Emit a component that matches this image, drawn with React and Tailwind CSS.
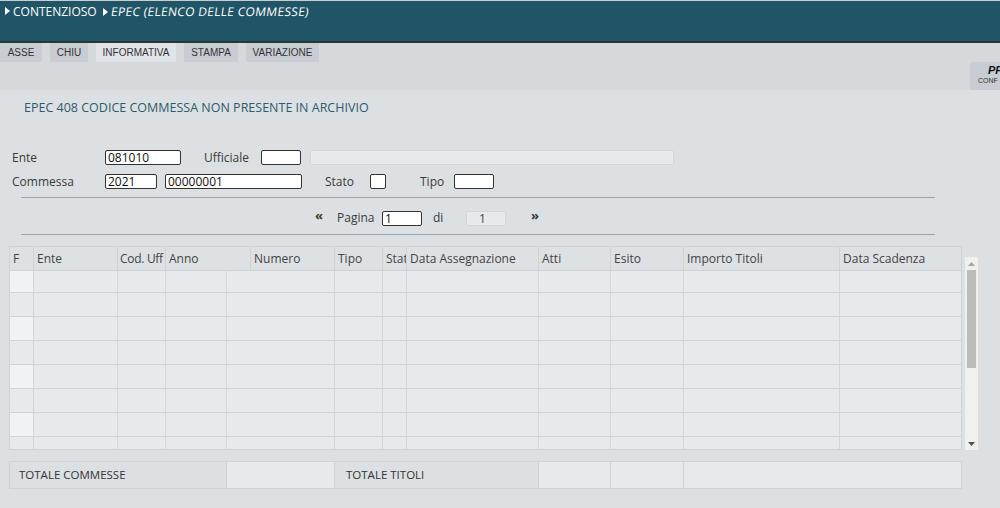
import React from 'react'

const headCols = [
  { label: 'F', w: 24 },
  { label: 'Ente', w: 84 },
  { label: 'Cod. Uff', w: 48 },
  { label: 'Anno', w: 85 },
  { label: 'Numero', w: 84 },
  { label: 'Tipo', w: 48 },
  { label: 'Stato', w: 24 },
  { label: 'Data Assegnazione', w: 132 },
  { label: 'Atti', w: 72 },
  { label: 'Esito', w: 73 },
  { label: 'Importo Titoli', w: 156 },
  { label: 'Data Scadenza', w: 123 },
]

const bodyCols = [24, 84, 48, 61, 108, 48, 24, 132, 72, 73, 156, 123]

const tabs = [
  { label: 'ASSE', w: 42 },
  { label: 'CHIU', w: 38 },
  { label: 'INFORMATIVA', w: 80 },
  { label: 'STAMPA', w: 54 },
  { label: 'VARIAZIONE', w: 73 },
]

const Arrow = () => (
  <svg width="5" height="8" viewBox="0 0 5 8" className="inline-block mr-[3px] mb-[2px]">
    <path d="M0 0 L5 4 L0 8 Z" fill="#ffffff" />
  </svg>
)

const Input = ({ value, w, disabled }) => (
  <div
    className={
      disabled
        ? 'h-[15px] border border-[#d3d7da] bg-[#e7eaed] rounded-[2px] text-[12px] leading-[13px] pl-[12px] text-[#444]'
        : 'h-[15px] border border-[#333] bg-white rounded-[2px] text-[12px] leading-[13px] pl-[2px] text-[#111]'
    }
    style={{ width: w }}
  >
    {value}
  </div>
)

const App = () => {
  const rows = Array.from({ length: 8 })

  return (
    <div className="w-[1000px] h-[508px] overflow-hidden bg-[#dce0e3] text-[#333] font-['Open_Sans',sans-serif]">
      {/* header */}
      <div className="h-[43px] bg-[#1f5567] border-t border-[#c9cdd0] border-b-2 border-b-[#28373c] pl-[5px] pt-[2px]">
        <div className="text-white text-[12px] leading-[18px] flex items-center">
          <Arrow />
          <span>CONTENZIOSO</span>
          <span className="ml-[6px]"><Arrow /></span>
          <span className="inline-block -skew-x-[8deg] tracking-[0.3px]">EPEC (ELENCO DELLE COMMESSE)</span>
        </div>
      </div>

      {/* tabs */}
      <div className="h-[47px] bg-[#d5d9dc] flex flex-col">
        <div className="flex gap-[8px] h-[19px]">
          {tabs.map((t) => (
            <div
              key={t.label}
              className={
                (t.label === 'INFORMATIVA' ? 'bg-[#e1e4e7]' : 'bg-[#c7cdd2]') +
                " text-center text-[10px] leading-[19px] text-[#333] font-['Liberation_Sans',sans-serif]"
              }
              style={{ width: t.w }}
            >
              {t.label}
            </div>
          ))}
        </div>
        <div className="flex justify-end flex-1">
          <div className="w-[30px] h-[28px] bg-[#c7cdd2] rounded-tl-[3px] pl-[8px] pt-[2px] overflow-hidden font-['Liberation_Sans',sans-serif]">
            <div className="text-[11px] leading-[13px] font-bold italic text-[#111] pl-[10px]">PF</div>
            <div className="text-[7px] leading-[8px] text-[#333]">CONF</div>
          </div>
        </div>
      </div>

      {/* message */}
      <div className="pl-[24px] pt-[11px] text-[12.5px] leading-[14px] text-[#2e5a6d]">
        EPEC 408 CODICE COMMESSA NON PRESENTE IN ARCHIVIO
      </div>

      {/* form */}
      <div className="pt-[35px] pl-[12px] text-[12px] text-[#3a3a3a]">
        <div className="flex items-center h-[15px]">
          <span className="w-[93px]">Ente</span>
          <Input value="081010" w={76} />
          <span className="ml-[23px] w-[57px]">Ufficiale</span>
          <Input value="" w={40} />
          <span className="ml-[9px]"><Input value="" w={364} disabled /></span>
        </div>
        <div className="flex items-center h-[15px] mt-[9px]">
          <span className="w-[93px]">Commessa</span>
          <Input value="2021" w={52} />
          <span className="ml-[8px]"><Input value="00000001" w={137} /></span>
          <span className="ml-[23px] w-[45px]">Stato</span>
          <Input value="" w={16} />
          <span className="ml-[34px] w-[34px]">Tipo</span>
          <Input value="" w={40} />
        </div>
      </div>

      <div className="ml-[21px] w-[914px] h-[1px] bg-[#8ca7af] mt-[8px]" />

      {/* pagination */}
      <div className="flex items-center h-[16px] mt-[12px] text-[12px] text-[#3a3a3a]">
        <span className="ml-[315px] w-[22px] font-bold text-[13px] leading-[12px] -mt-[6px]">«</span>
        <span className="w-[45px]">Pagina</span>
        <Input value="1" w={40} />
        <span className="ml-[11px] w-[33px]">di</span>
        <Input value="1" w={40} disabled />
        <span className="ml-[25px] font-bold text-[13px] leading-[12px] -mt-[6px]">»</span>
      </div>

      <div className="ml-[21px] w-[914px] h-[1px] bg-[#8ca7af] mt-[8px]" />

      {/* table */}
      <div className="flex mt-[11px] ml-[9px]">
        <div className="w-[953px] border border-[#cfd3d6]">
          <div className="flex h-[24px] bg-[#dde1e4] border-b border-[#cfd3d6]">
            {headCols.map((c, i) => (
              <div
                key={i}
                className={
                  (i > 0 ? 'border-l border-[#cfd3d6] ' : '') +
                  (i === 2 ? 'pl-[2px] tracking-[-0.3px] ' : 'pl-[3px] ') +
                  'shrink-0 overflow-hidden whitespace-nowrap text-[12px] leading-[23px] text-[#444]'
                }
                style={{ width: c.w - (i === 0 ? 1 : 0) }}
              >
                {c.label}
              </div>
            ))}
          </div>
          <div className="h-[178px] overflow-hidden bg-[#e6eaed]">
            {rows.map((_, r) => (
              <div key={r} className={(r === 0 ? 'h-[22px] ' : 'h-[24px] ') + 'flex border-b border-[#cfd3d6]'}>
                {bodyCols.map((w, i) => (
                  <div
                    key={i}
                    className={
                      (i > 0 ? 'border-l border-[#d2d6d9] ' : '') +
                      (i === 0 && r % 2 === 0 ? 'bg-[#f1f2f3] ' : '') +
                      'shrink-0'
                    }
                    style={{ width: w - (i === 0 ? 1 : 0) }}
                  />
                ))}
              </div>
            ))}
          </div>
        </div>

        {/* scrollbar */}
        <div className="ml-[3px] mt-[11px] w-[13px] h-[193px] bg-[#f0f0f0] flex flex-col items-center">
          <div className="h-[13px] flex items-center justify-center">
            <svg width="7" height="4" viewBox="0 0 7 4">
              <path d="M0 4 L3.5 0 L7 4 Z" fill="#a3a3a3" />
            </svg>
          </div>
          <div className="w-[9px] h-[98px] bg-[#bcbcbc]" />
          <div className="flex-1" />
          <div className="h-[13px] flex items-center justify-center">
            <svg width="7" height="4" viewBox="0 0 7 4">
              <path d="M0 0 L3.5 4 L7 0 Z" fill="#505050" />
            </svg>
          </div>
        </div>
      </div>

      {/* totals */}
      <div className="ml-[9px] mt-[11px] w-[953px] h-[28px] border border-[#cfd3d6] flex text-[11.5px] text-[#333]">
        <div className="w-[216px] bg-[#dce0e3] pl-[9px] leading-[26px]">TOTALE COMMESSE</div>
        <div className="w-[108px] bg-[#e6eaed] border-l border-[#cfd3d6]" />
        <div className="w-[204px] bg-[#dce0e3] border-l border-[#cfd3d6] pl-[11px] leading-[26px]">TOTALE TITOLI</div>
        <div className="w-[72px] bg-[#e6eaed] border-l border-[#cfd3d6]" />
        <div className="w-[73px] bg-[#e6eaed] border-l border-[#cfd3d6]" />
        <div className="flex-1 bg-[#e6eaed] border-l border-[#cfd3d6]" />
      </div>
    </div>
  )
}

export default App
